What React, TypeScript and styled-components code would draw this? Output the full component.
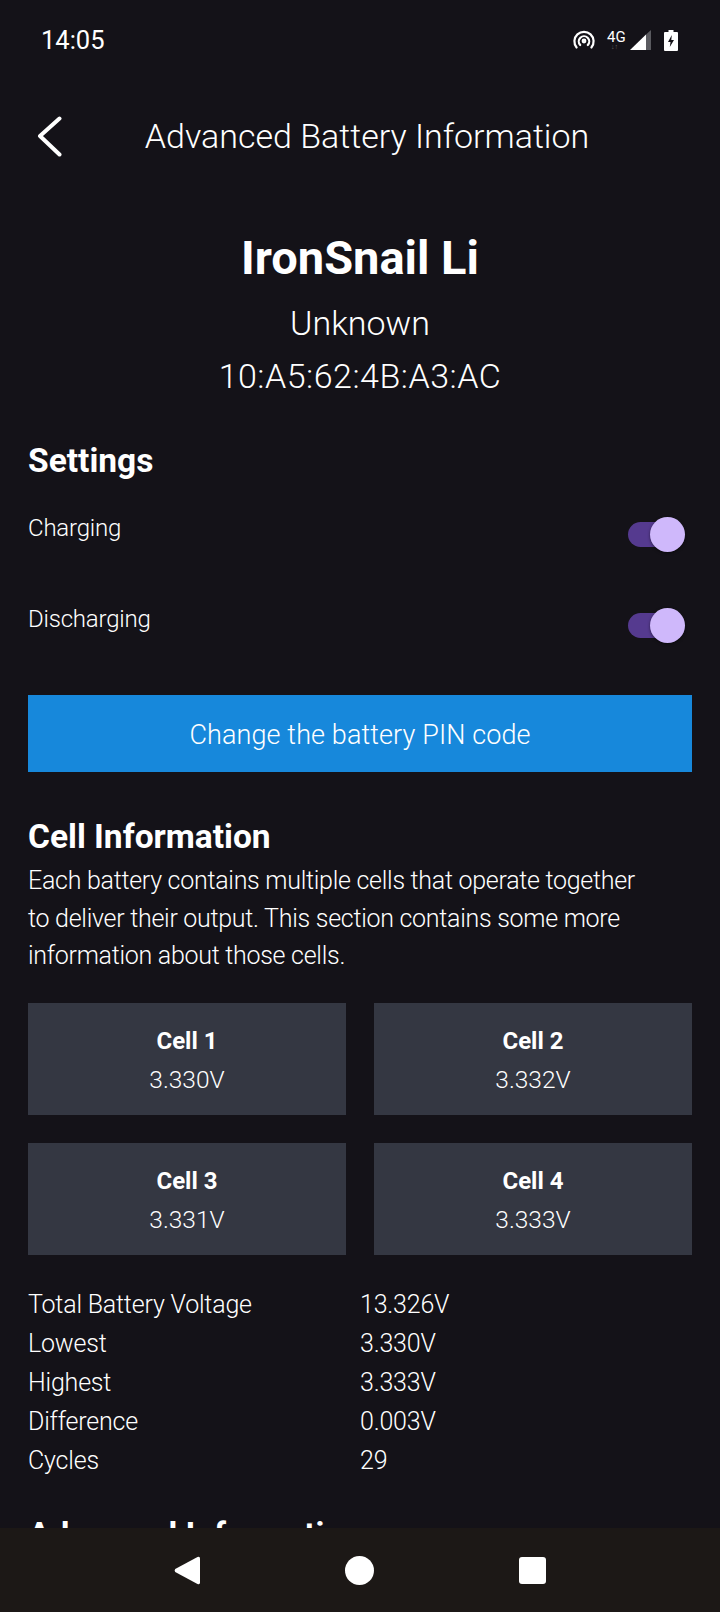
import React from 'react';
import styled, { createGlobalStyle } from 'styled-components';

const GlobalStyle = createGlobalStyle`
  html, body { margin: 0; padding: 0; background: #141218; }
  body { font-family: "Roboto", "Noto Sans", sans-serif; color: #fff; }
`;

const cells = [
  { name: 'Cell 1', volt: '3.330V' },
  { name: 'Cell 2', volt: '3.332V' },
  { name: 'Cell 3', volt: '3.331V' },
  { name: 'Cell 4', volt: '3.333V' },
];

const stats = [
  ['Total Battery Voltage', '13.326V'],
  ['Lowest', '3.330V'],
  ['Highest', '3.333V'],
  ['Difference', '0.003V'],
  ['Cycles', '29'],
];

const App = () => (
  <Screen>
    <GlobalStyle />
    <StatusBar>
      <Time>14:05</Time>
      <StatusIcons>
        <svg width="22" height="20" viewBox="0 0 22 20" fill="none" stroke="#fff" strokeWidth="2.2" strokeLinecap="round">
          <path d="M3.6 17.5a9.6 9.6 0 1 1 14.8 0" />
          <path d="M7.2 15a5.2 5.2 0 1 1 7.6 0" />
          <circle cx="11" cy="11" r="1.3" />
        </svg>
        <NetworkType>4G<NetworkArrows>↓↑</NetworkArrows></NetworkType>
        <SignalIcon width="21" height="20" viewBox="0 0 21 20">
          <path d="M0 20 L16 4.5 L16 20 Z" fill="#fff" />
          <path d="M16 4.5 L21 0 L21 20 L16 20 Z" fill="#5a5a5f" />
        </SignalIcon>
        <BatteryIcon width="14" height="21" viewBox="0 0 14 21">
          <path d="M4.5 0h5v2H13a1 1 0 0 1 1 1v17a1 1 0 0 1-1 1H1a1 1 0 0 1-1-1V3a1 1 0 0 1 1-1h3.500z" fill="#fff" />
          <path d="M7.800 5 4 12h2.500l-.7 5L10 10H7.300z" fill="#141218" />
        </BatteryIcon>
      </StatusIcons>
    </StatusBar>
    <Header>
      <BackButton>
        <svg width="25" height="41" viewBox="0 0 25 41" fill="none" stroke="#fff" strokeWidth="4" strokeLinecap="round" strokeLinejoin="round">
          <path d="M22.500 2.500 L3 20 L22.500 38.500" />
        </svg>
      </BackButton>
      <Title>Advanced Battery Information</Title>
    </Header>
    <Device>
      <DeviceName>IronSnail Li</DeviceName>
      <DeviceLine>Unknown</DeviceLine>
      <DeviceLine $mono>10:A5:62:4B:A3:AC</DeviceLine>
    </Device>
    <Content>
      <SectionTitle>Settings</SectionTitle>
      <SettingRow>
        <SettingLabel>Charging</SettingLabel>
        <Toggle><ToggleThumb /></Toggle>
      </SettingRow>
      <SettingRow>
        <SettingLabel>Discharging</SettingLabel>
        <Toggle><ToggleThumb /></Toggle>
      </SettingRow>
      <PinButton>Change the battery PIN code</PinButton>
      <SectionTitle>Cell Information</SectionTitle>
      <Paragraph>
        Each battery contains multiple cells that operate together<br />
        to deliver their output. This section contains some more<br />
        information about those cells.
      </Paragraph>
      <CellGrid>
        {cells.map(c => (
          <CellCard key={c.name}>
            <CellName>{c.name}</CellName>
            <CellVolt>{c.volt}</CellVolt>
          </CellCard>
        ))}
      </CellGrid>
      <StatList>
        {stats.map(([label, value]) => (
          <React.Fragment key={label}>
            <StatText>{label}</StatText>
            <StatText>{value}</StatText>
          </React.Fragment>
        ))}
      </StatList>
      <SectionTitle>Advanced Information</SectionTitle>
    </Content>
    <NavBar>
      <svg width="26" height="29" viewBox="0 0 26 29">
        <path d="M26 2.500 V26.500 Q26 29 23.500 28 L1.200 16 Q0 14.500 1.200 13 L23.500 1 Q26 0 26 2.500 Z" fill="#fff" />
      </svg>
      <HomeDot />
      <RecentSquare />
    </NavBar>
  </Screen>
);

export default App;

const Screen = styled.div`
  position: relative;
  width: 720px;
  height: 1612px;
  overflow: hidden;
  background: #141218;
`;

const StatusBar = styled.div`
  height: 80px;
  padding: 0 42px 0 41px;
  display: flex;
  align-items: center;
  justify-content: space-between;
`;

const Time = styled.div`
  font-size: 25.5px;
  font-weight: 400;
`;

const StatusIcons = styled.div`
  display: flex;
  align-items: center;
`;

const NetworkType = styled.div`
  position: relative;
  width: 19px;
  margin-left: 12px;
  margin-top: -7px;
  font-size: 15px;
  line-height: 16px;
`;

const NetworkArrows = styled.span`
  position: absolute;
  left: 4px;
  top: 14px;
  font-size: 7px;
  line-height: 8px;
  color: #666;
`;

const SignalIcon = styled.svg`
  margin-left: 4px;
`;

const BatteryIcon = styled.svg`
  margin-left: 13px;
`;

const Header = styled.div`
  position: relative;
  height: 112px;
  padding-left: 14px;
  display: flex;
  align-items: center;
  justify-content: center;
`;

const BackButton = styled.div`
  position: absolute;
  left: 37px;
  top: 36px;
  line-height: 0;
`;

const Title = styled.h1`
  margin: 0;
  font-size: 34px;
  font-weight: 300;
`;

const Device = styled.div`
  padding-top: 36px;
  display: flex;
  flex-direction: column;
  align-items: center;
`;

const DeviceName = styled.div`
  font-size: 47px;
  font-weight: 700;
  line-height: 60px;
  margin-bottom: 9px;
`;

const DeviceLine = styled.div<{ $mono?: boolean }>`
  font-size: 34px;
  font-weight: 300;
  line-height: 53px;
  letter-spacing: ${p => (p.$mono ? '0.5px' : '0')};
`;

const Content = styled.div`
  padding: 36px 28px 0;
`;

const SectionTitle = styled.h2`
  margin: 0;
  font-size: 33.5px;
  font-weight: 700;
  line-height: 44px;
`;

const SettingRow = styled.div`
  height: 91px;
  display: flex;
  justify-content: space-between;
  align-items: flex-start;
  &:first-of-type {
    margin-top: 10px;
  }
`;

const SettingLabel = styled.div`
  font-size: 24px;
  font-weight: 300;
  letter-spacing: -0.2px;
  line-height: 40px;
  margin-top: 15px;
`;

const Toggle = styled.div`
  position: relative;
  width: 50px;
  height: 25px;
  margin: 29px 14px 0 0;
  border-radius: 13px;
  background: #553a8f;
`;

const ToggleThumb = styled.div`
  position: absolute;
  right: -7px;
  top: -5px;
  width: 35px;
  height: 35px;
  border-radius: 50%;
  background: #cfb8fb;
  box-shadow: 0 1px 3px rgba(0, 0, 0, 0.5);
`;

const PinButton = styled.div`
  height: 77px;
  margin: 20px 0 43px;
  padding-top: 2px;
  box-sizing: border-box;
  display: flex;
  align-items: center;
  justify-content: center;
  background: #1788db;
  font-size: 27px;
  font-weight: 300;
  letter-spacing: 0.1px;
`;

const Paragraph = styled.p`
  margin: 3px 0 0;
  font-size: 25px;
  font-weight: 300;
  letter-spacing: -0.28px;
  line-height: 37.7px;
`;

const CellGrid = styled.div`
  margin-top: 28px;
  display: grid;
  grid-template-columns: 1fr 1fr;
  gap: 28px;
`;

const CellCard = styled.div`
  height: 112px;
  padding-top: 2px;
  box-sizing: border-box;
  display: flex;
  flex-direction: column;
  align-items: center;
  justify-content: center;
  background: #343742;
`;

const CellName = styled.div`
  font-size: 24px;
  font-weight: 700;
  line-height: 38px;
`;

const CellVolt = styled.div`
  margin-top: 1px;
  font-size: 24.5px;
  font-weight: 300;
  line-height: 38px;
`;

const StatList = styled.div`
  margin: 30px 0 33px;
  display: grid;
  grid-template-columns: 332px 1fr;
`;

const StatText = styled.div`
  font-size: 25px;
  font-weight: 300;
  letter-spacing: -0.2px;
  line-height: 39px;
`;

const NavBar = styled.div`
  position: absolute;
  left: 0;
  right: 0;
  bottom: 0;
  height: 84px;
  display: flex;
  align-items: center;
  justify-content: space-between;
  padding: 0 174px;
  background: #1c1816;
`;

const HomeDot = styled.div`
  width: 29px;
  height: 29px;
  border-radius: 50%;
  background: #fff;
`;

const RecentSquare = styled.div`
  width: 27px;
  height: 27px;
  border-radius: 3px;
  background: #fff;
`;
